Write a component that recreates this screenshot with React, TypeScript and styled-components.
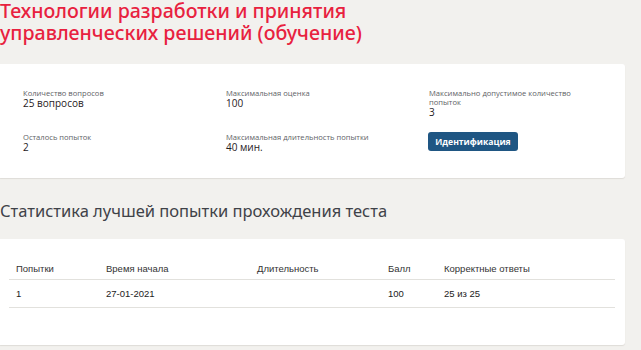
import React from "react";
import styled, { createGlobalStyle } from "styled-components";

const Global = createGlobalStyle`
  html, body { margin: 0; padding: 0; background: #f2f1ee; }
  body { font-family: "Open Sans", "Noto Sans", sans-serif; }
`;

const Page = styled.div`
  width: 641px;
  height: 350px;
  overflow: hidden;
  background: #f2f1ee;
`;

const Title = styled.h1`
  margin: 0;
  font-family: "Noto Sans", sans-serif;
  font-weight: 500;
  font-size: 19.6px;
  line-height: 22px;
  color: #e8213f;
`;

const Card = styled.div<{ $mt: number; $h: number }>`
  margin-top: ${(p) => p.$mt}px;
  width: 625px;
  height: ${(p) => p.$h}px;
  box-sizing: border-box;
  background: #fff;
  border-radius: 0 3px 3px 0;
  box-shadow: 0 1px 1px #dedcd7;
`;

const InfoGrid = styled.div`
  display: grid;
  grid-template-columns: 203px 203px 160px;
  grid-template-rows: 44px auto;
  padding: 25px 0 0 23px;
`;

const Field = styled.div`
  display: flex;
  flex-direction: column;
`;

const Label = styled.div`
  font-family: "Open Sans", sans-serif;
  font-size: 7.6px;
  line-height: 9px;
  color: #606266;
`;

const Value = styled.div`
  font-family: "Open Sans", sans-serif;
  font-size: 10px;
  line-height: 11px;
  color: #1f2023;
  font-weight: 500;
`;

const Button = styled.button`
  align-self: flex-start;
  margin-left: -1px;
  margin-top: -1px;
  width: 90px;
  height: 19px;
  border: none;
  border-radius: 3px;
  background: #1f5683;
  color: #fff;
  font-family: "Open Sans", sans-serif;
  font-weight: 700;
  font-size: 8.6px;
  padding: 0;
`;

const Subtitle = styled.h2`
  margin: 0;
  margin-top: 22px;
  font-family: "Noto Sans", sans-serif;
  font-weight: 400;
  font-size: 16.5px;
  line-height: 22px;
  color: #3f4248;
`;

const TableWrap = styled.div`
  padding: 18px 10px 0 9px;
`;

const Table = styled.table`
  width: 606px;
  border-collapse: collapse;
  font-family: "Liberation Sans", Arial, sans-serif;
  font-size: 9.5px;
  color: #222;
`;

const Th = styled.th<{ $w?: number }>`
  text-align: left;
  font-weight: 400;
  color: #333;
  height: 22px;
  padding: 0 0 0 7px;
  border-bottom: 1px solid #e2e1dd;
  width: ${(p) => (p.$w ? `${p.$w}px` : "auto")};
`;

const Td = styled.td`
  height: 27px;
  padding: 0 0 0 7px;
  border-bottom: 1px solid #e2e1dd;
`;

export default function App() {
  return (
    <Page>
      <Global />
      <Title>
        Технологии разработки и принятия
        <br />
        управленческих решений (обучение)
      </Title>
      <Card $mt={20} $h={114}>
        <InfoGrid>
          <Field>
            <Label>Количество вопросов</Label>
            <Value>25 вопросов</Value>
          </Field>
          <Field>
            <Label>Максимальная оценка</Label>
            <Value>100</Value>
          </Field>
          <Field>
            <Label>Максимально допустимое количество попыток</Label>
            <Value>3</Value>
          </Field>
          <Field>
            <Label>Осталось попыток</Label>
            <Value>2</Value>
          </Field>
          <Field>
            <Label>Максимальная длительность попытки</Label>
            <Value>40 мин.</Value>
          </Field>
          <Field>
            <Button>Идентификация</Button>
          </Field>
        </InfoGrid>
      </Card>
      <Subtitle>Статистика лучшей попытки прохождения теста</Subtitle>
      <Card $mt={17} $h={106}>
        <TableWrap>
          <Table>
            <thead>
              <tr>
                <Th $w={83}>Попытки</Th>
                <Th $w={144}>Время начала</Th>
                <Th $w={124}>Длительность</Th>
                <Th $w={49}>Балл</Th>
                <Th>Корректные ответы</Th>
              </tr>
            </thead>
            <tbody>
              <tr>
                <Td>1</Td>
                <Td>27-01-2021</Td>
                <Td></Td>
                <Td>100</Td>
                <Td>25 из 25</Td>
              </tr>
            </tbody>
          </Table>
        </TableWrap>
      </Card>
    </Page>
  );
}
